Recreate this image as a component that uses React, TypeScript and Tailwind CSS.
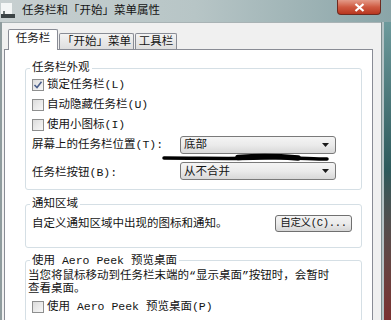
import React from 'react';

const font = { fontFamily: '"Liberation Mono", "Noto Sans CJK SC", monospace' };

function Checkbox({ checked }: { checked?: boolean }) {
    return (
        <span className="w-[12px] h-[12px] shrink-0 border border-[#8e8f8f] bg-gradient-to-br from-[#dcdcdc] to-[#f8f8f8] flex items-center justify-center">
            {checked && (
                <svg width="10" height="10" viewBox="0 0 10 10">
                    <path d="M1.5 5 L4 7.5 L8.5 1.8" fill="none" stroke="#4a5f8c" strokeWidth={1.6} />
                </svg>
            )}
        </span>
    );
}

function CheckRow({ label, checked, className = '' }: { label: string; checked?: boolean; className?: string }) {
    return (
        <div className={`flex items-center gap-[3px] ${className}`}>
            <Checkbox checked={checked} />
            <span>{label}</span>
        </div>
    );
}

function Select({ value }: { value: string }) {
    return (
        <div className="w-[156px] h-[18px] flex items-center justify-between pl-[3px] pr-[6px] border border-[#7a7a7a] rounded-[3px] bg-gradient-to-b from-[#f4f4f4] via-[#ebebeb] to-[#d8d8d8]">
            <span>{value}</span>
            <svg width="7" height="4" viewBox="0 0 7 4">
                <path d="M0 0 H7 L3.5 4 Z" fill="#1a1a1a" />
            </svg>
        </div>
    );
}

function Group({ title, children, className = '' }: { title: string; children: React.ReactNode; className?: string }) {
    return (
        <fieldset className={`ml-[20px] w-[337px] border border-[#d5dfe5] rounded-[3px] pl-[4px] ${className}`}>
            <legend className="px-[2px] leading-[14px]">{title}</legend>
            {children}
        </fieldset>
    );
}

export default function App() {
    return (
        <div className="relative w-[391px] h-[320px] overflow-hidden text-[11.5px] text-[#141414] bg-gradient-to-r from-[#c8d0d1] via-[#b7c5c6] to-[#8aa5a8]" style={font}>
            {/* Title bar */}
            <div className="h-[22px] flex items-start">
                <svg width="16" height="18" viewBox="0 0 16 18" className="mt-[2px]">
                    <rect x="1" y="1" width="11" height="14" fill="#f4f6f6" />
                    <rect x="1" y="12" width="14" height="4" fill="#3c4446" />
                    <rect x="3" y="9" width="2" height="3" fill="#6c7576" />
                </svg>
                <span className="ml-[6px] mt-[4px] leading-[14px]">任务栏和「开始」菜单属性</span>
                <div className="ml-auto mr-[10px] w-[44px] h-[15px] rounded-b-[4px] border border-t-0 border-[#6e2a1f] bg-gradient-to-b from-[#e39a88] via-[#cf5a41] to-[#b8361f] flex items-center justify-center">
                    <svg width="11" height="9" viewBox="0 0 11 9">
                        <path d="M1.5 1 L9.5 8 M9.5 1 L1.5 8" stroke="#fff" strokeWidth={2.2} />
                    </svg>
                </div>
            </div>

            <div className="flex h-[298px]">
                <div className="w-[2px] bg-[#8f9c9e]" />

                {/* Client area */}
                <div className="w-[379px] bg-[#f0f0f0] border-t border-[#a9b3b5]">
                    {/* Tabs */}
                    <div className="flex items-end pl-[6px] pt-[5px] h-[26px]">
                        <div className="relative z-10 -mb-px h-[21px] w-[50px] bg-white border border-b-0 border-[#898c95] rounded-t-[2px] flex items-center justify-center pb-[2px]">
                            任务栏
                        </div>
                        <div className="h-[16px] w-[75px] ml-px bg-gradient-to-b from-[#f3f3f3] to-[#dedede] border border-b-0 border-[#898c95] rounded-t-[2px] flex items-center justify-center">
                            「开始」菜单
                        </div>
                        <div className="h-[16px] w-[42px] ml-px bg-gradient-to-b from-[#f3f3f3] to-[#dedede] border border-b-0 border-[#898c95] rounded-t-[2px] flex items-center justify-center">
                            工具栏
                        </div>
                    </div>

                    {/* Tab panel */}
                    <div className="ml-[2px] w-[369px] h-[290px] bg-white border border-[#898c95] pt-[11px]">
                        <Group title="任务栏外观" className="pb-[8px]">
                            <div className="pl-[2px] flex flex-col">
                                <CheckRow checked label="锁定任务栏(L)" className="h-[20px]" />
                                <CheckRow label="自动隐藏任务栏(U)" className="h-[20px]" />
                                <CheckRow label="使用小图标(I)" className="h-[19px]" />
                                <div className="flex items-center mt-[2px]">
                                    <span className="w-[148px]">屏幕上的任务栏位置(T):</span>
                                    <Select value="底部" />
                                </div>
                                <div className="flex items-center mt-[7px]">
                                    <span className="w-[148px] mt-[3px]">任务栏按钮(B):</span>
                                    <Select value="从不合并" />
                                </div>
                            </div>
                        </Group>

                        <Group title="通知区域" className="mt-[7px] pb-[14px]">
                            <div className="pl-[2px] pr-[9px] flex items-center justify-between mt-[4px]">
                                <span>自定义通知区域中出现的图标和通知。</span>
                                <div className="w-[77px] h-[17px] border border-[#707070] rounded-[3px] bg-gradient-to-b from-[#f4f4f4] via-[#ebebeb] to-[#d6d6d6] flex items-center justify-center whitespace-nowrap text-[10.5px] tracking-[-0.3px]">
                                    自定义(C)...
                                </div>
                            </div>
                        </Group>

                        <Group title="使用 Aero Peek 预览桌面" className="mt-[6px] pb-[6px]">
                            <p className="-ml-[2px] leading-[13px] mt-[1px]">
                                当您将鼠标移动到任务栏末端的“显示桌面”按钮时，会暂时
                                <br />
                                查看桌面。
                            </p>
                            <CheckRow label="使用 Aero Peek 预览桌面(P)" className="h-[16px] mt-[4px] pl-[2px]" />
                        </Group>
                    </div>
                </div>

                {/* Window edge */}
                <div className="w-[3px] bg-[#b5c3c5] border-l border-[#7d8c8e]" />
                <div className="w-[7px] bg-gradient-to-b from-[#6d9a9c] via-[#2d5a5c] to-[#7a3030]" />
            </div>

            {/* Scribble over the first dropdown */}
            <svg className="absolute left-[160px] top-[151px]" width="175" height="14" viewBox="0 0 175 14">
                <path d="M4 7 C 40 7, 70 8, 100 7 S 150 8, 167 8" fill="none" stroke="#000" strokeWidth={3.5} strokeLinecap="round" />
                <path d="M78 6.5 C 100 5, 120 5.5, 138 7" fill="none" stroke="#000" strokeWidth={5.5} strokeLinecap="round" />
            </svg>
        </div>
    );
}
